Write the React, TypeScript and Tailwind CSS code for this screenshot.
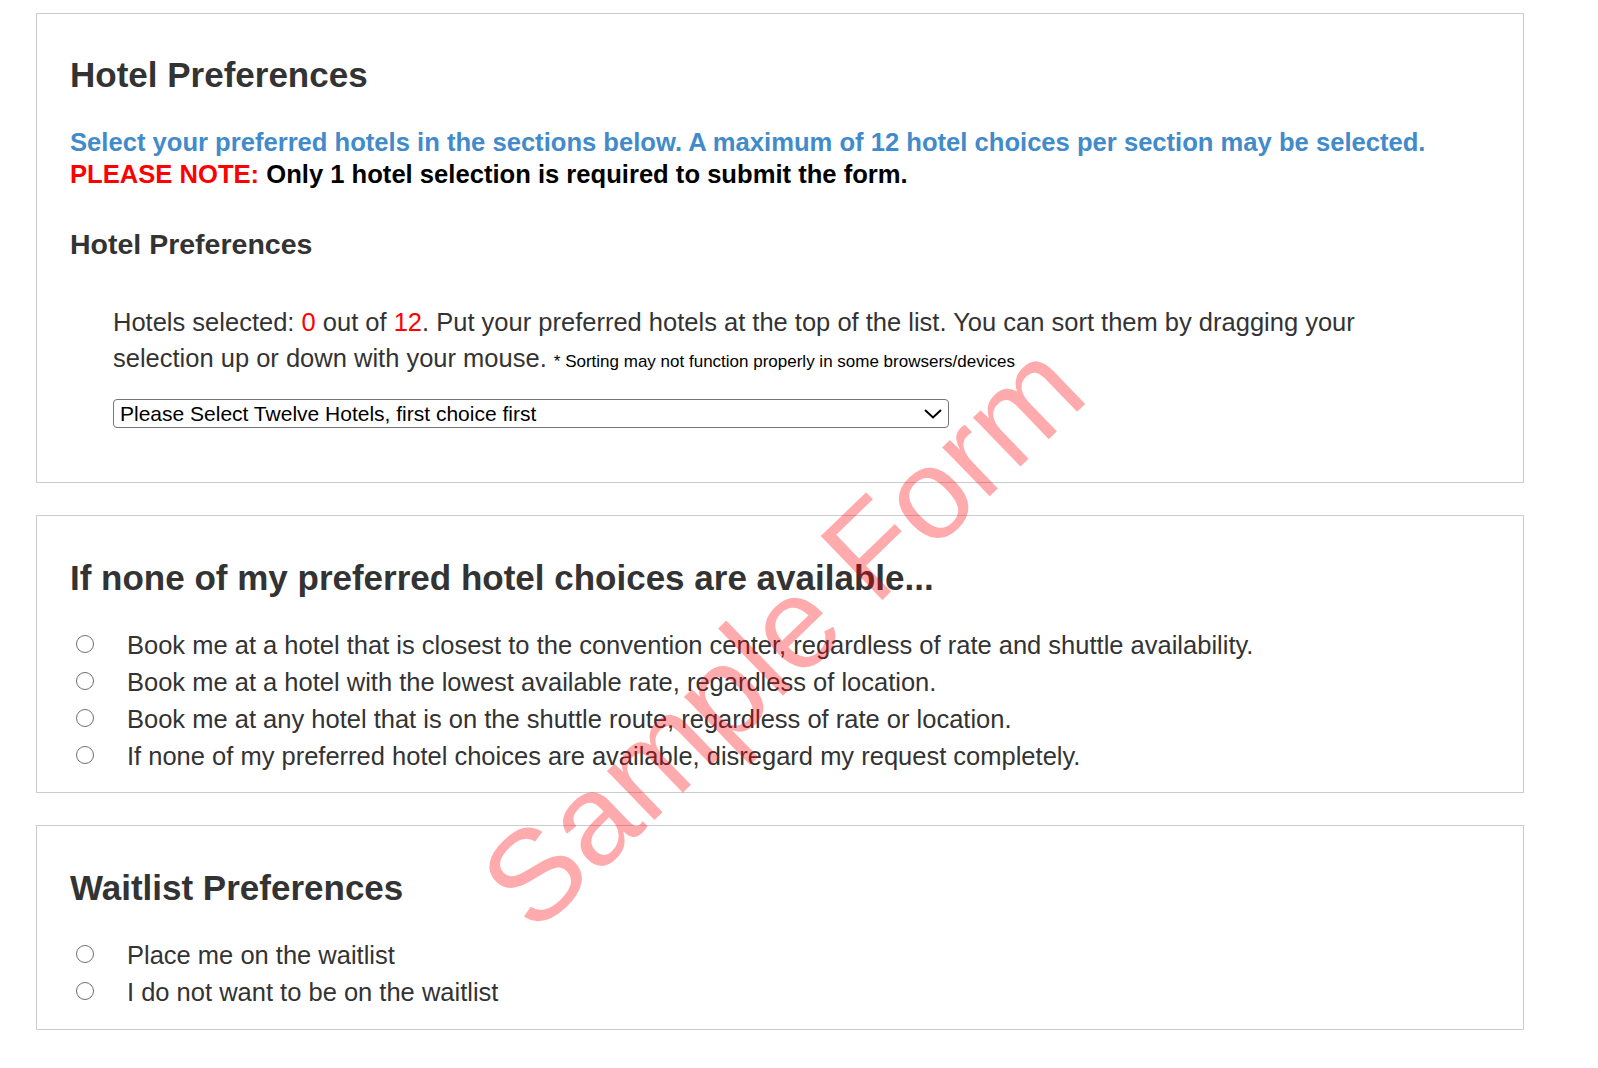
import React from "react";

function Radio() {
  return (
    <span className="ml-[6px] -mt-[3px] inline-block h-[18px] w-[18px] shrink-0 rounded-full border border-[#6f6f6f] bg-white" />
  );
}

function Option({ label }: { label: string }) {
  return (
    <label className="flex items-center text-[25.5px] leading-[37px] text-[#333333]">
      <Radio />
      <span className="ml-[33px]">{label}</span>
    </label>
  );
}

export default function App() {
  return (
    <div className="relative min-h-[1068px] w-[1598px] overflow-hidden bg-white font-['Liberation_Sans',Arial,sans-serif]">
      <div className="flex w-[1488px] flex-col pl-[36px] pt-[13px]">
        {/* Box 1 */}
        <section className="w-[1488px] border border-[#cccccc] pl-[33px] pt-[41px] pb-[54px]">
          <h2 className="text-[35px] font-bold leading-[40px] text-[#333333]">Hotel Preferences</h2>
          <p className="mt-[31px] text-[25.6px] font-bold leading-[32px] text-[#428bca]">
            Select your preferred hotels in the sections below. A maximum of 12 hotel choices per section may be selected.
          </p>
          <p className="text-[25.6px] font-bold leading-[32px] text-black">
            <span className="text-[#ff0000]">PLEASE NOTE:</span> Only 1 hotel selection is required to submit the form.
          </p>
          <h3 className="mt-[37px] text-[28.5px] font-bold leading-[34px] text-[#333333]">Hotel Preferences</h3>
          <div className="ml-[43px]">
            <p className="mt-[43px] w-[1260px] text-[25.5px] leading-[36px] text-[#333333]">
              Hotels selected: <span className="text-[#ff0000]">0</span> out of{" "}
              <span className="text-[#ff0000]">12</span>. Put your preferred hotels at the top of the list. You can sort them by dragging your selection up or down with your mouse.{" "}
              <span className="text-[17px] text-black">* Sorting may not function properly in some browsers/devices</span>
            </p>
            <div className="relative mt-[19px] h-[29px] w-[836px]">
              <select className="h-[29px] w-[836px] appearance-none rounded-[4px] border border-[#767676] bg-white pl-[6px] text-[21px] leading-[27px] text-black outline-none">
                <option>Please Select Twelve Hotels, first choice first</option>
              </select>
              <svg
                className="pointer-events-none absolute right-[7px] top-[10px]"
                width="18"
                height="10"
                viewBox="0 0 18 10"
                fill="none"
              >
                <path d="M1 1 L9 8.5 L17 1" stroke="#000" strokeWidth="2" />
              </svg>
            </div>
          </div>
        </section>

        {/* Box 2 */}
        <section className="mt-[32px] w-[1488px] border border-[#cccccc] pl-[33px] pt-[42px] pb-[17px]">
          <h2 className="text-[35px] font-bold leading-[40px] text-[#333333]">
            If none of my preferred hotel choices are available...
          </h2>
          <div className="mt-[29px] flex flex-col">
            <Option label="Book me at a hotel that is closest to the convention center, regardless of rate and shuttle availability." />
            <Option label="Book me at a hotel with the lowest available rate, regardless of location." />
            <Option label="Book me at any hotel that is on the shuttle route, regardless of rate or location." />
            <Option label="If none of my preferred hotel choices are available, disregard my request completely." />
          </div>
        </section>

        {/* Box 3 */}
        <section className="mt-[32px] w-[1488px] border border-[#cccccc] pl-[33px] pt-[42px] pb-[18px]">
          <h2 className="text-[35px] font-bold leading-[40px] text-[#333333]">Waitlist Preferences</h2>
          <div className="mt-[29px] flex flex-col">
            <Option label="Place me on the waitlist" />
            <Option label="I do not want to be on the waitlist" />
          </div>
        </section>
      </div>

      {/* Watermark */}
      <div className="pointer-events-none absolute left-[782px] top-[635px] -translate-x-1/2 -translate-y-1/2 rotate-[-44deg] whitespace-nowrap text-[129px] leading-none text-[rgba(255,0,10,0.33)]">
        Sample Form
      </div>
    </div>
  );
}
